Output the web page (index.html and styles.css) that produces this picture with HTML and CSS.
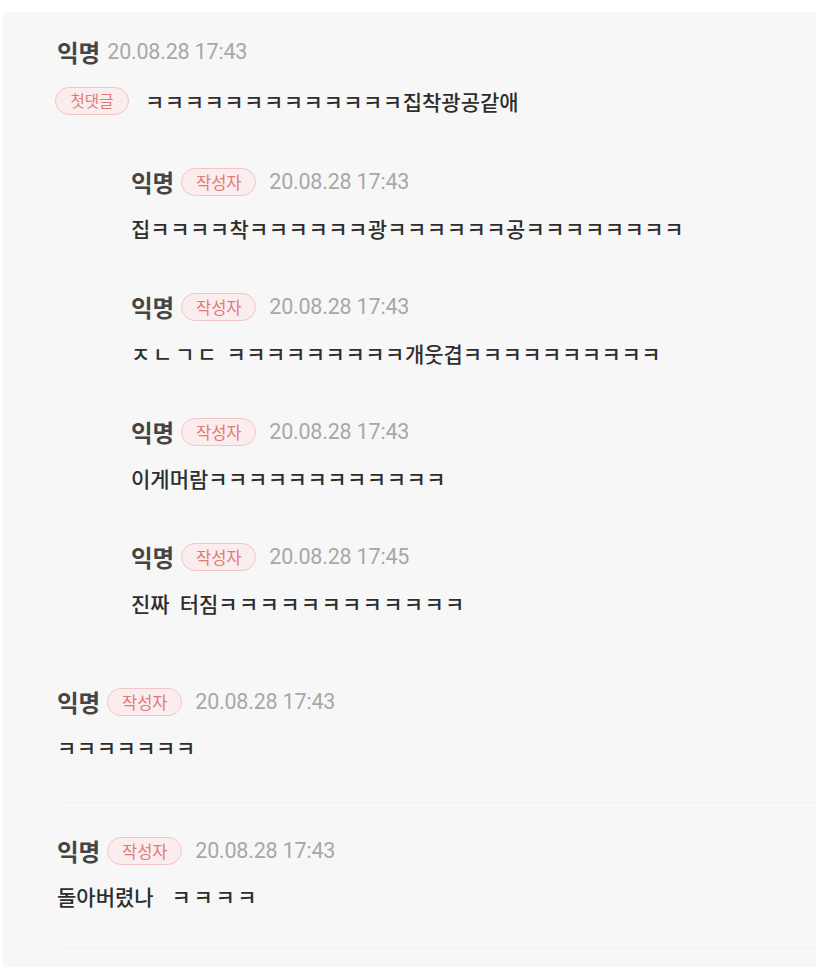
FILE: index.html
```html
<!DOCTYPE html>
<html lang="ko">
<head>
<meta charset="utf-8">
<link rel="stylesheet" href="styles.css">
</head>
<body>
<div class="page">
  <div class="comment top first">
    <div class="meta"><span class="name">익명</span><span class="date">20.08.28 17:43</span></div>
    <div class="text"><span class="badge first-badge">첫댓글</span><span class="k">ㅋㅋㅋㅋㅋㅋㅋㅋㅋㅋㅋㅋㅋ</span>집착광공같애</div>
  </div>

  <div class="replies">
    <div class="comment reply">
      <div class="meta"><span class="name">익명</span><span class="badge">작성자</span><span class="date">20.08.28 17:43</span></div>
      <div class="text">집<span class="k">ㅋㅋㅋㅋ</span>착<span class="k">ㅋㅋㅋㅋㅋㅋ</span>광<span class="k">ㅋㅋㅋㅋㅋㅋ</span>공<span class="k">ㅋㅋㅋㅋㅋㅋㅋㅋ</span></div>
    </div>
    <div class="comment reply">
      <div class="meta"><span class="name">익명</span><span class="badge">작성자</span><span class="date">20.08.28 17:43</span></div>
      <div class="text"><span class="j">ㅈㄴㄱㄷ</span><span class="sp sp-narrow"> </span><span class="k">ㅋㅋㅋㅋㅋㅋㅋㅋㅋ</span>개웃겹<span class="k">ㅋㅋㅋㅋㅋㅋㅋㅋㅋㅋ</span></div>
    </div>
    <div class="comment reply">
      <div class="meta"><span class="name">익명</span><span class="badge">작성자</span><span class="date">20.08.28 17:43</span></div>
      <div class="text">이게머람<span class="k">ㅋㅋㅋㅋㅋㅋㅋㅋㅋㅋㅋㅋ</span></div>
    </div>
    <div class="comment reply">
      <div class="meta"><span class="name">익명</span><span class="badge">작성자</span><span class="date">20.08.28 17:45</span></div>
      <div class="text">진짜<span class="sp"> </span>터짐<span class="k k-wide">ㅋㅋㅋㅋㅋㅋㅋㅋㅋㅋㅋㅋ</span></div>
    </div>
  </div>

  <div class="comment top second">
    <div class="meta"><span class="name">익명</span><span class="badge">작성자</span><span class="date">20.08.28 17:43</span></div>
    <div class="text"><span class="k">ㅋㅋㅋㅋㅋㅋㅋ</span></div>
  </div>
  <div class="sep"></div>

  <div class="comment top third">
    <div class="meta"><span class="name">익명</span><span class="badge">작성자</span><span class="date">20.08.28 17:43</span></div>
    <div class="text">돌아버렸나<span class="sp sp-wide"> </span><span class="k k-xwide">ㅋㅋㅋㅋ</span></div>
  </div>
  <div class="sep"></div>
</div>
</body>
</html>
```

FILE: styles.css
```css
html, body {
  margin: 0;
  padding: 0;
  background: #ffffff;
}

body {
  font-family: "Noto Sans CJK KR", "Noto Sans", sans-serif;
  color: #333333;
}

.page {
  margin: 12px 2px 0 3px;
  background: #f7f7f7;
  min-height: 955px;
  padding-top: 25px;
  box-sizing: border-box;
}

.comment {
  display: flex;
  flex-direction: column;
}

.top {
  padding-left: 54px;
}

.meta {
  height: 30px;
  display: flex;
  align-items: center;
  gap: 7px;
}

.name {
  font-size: 23.5px;
  font-weight: 700;
  color: #454545;
  line-height: 30px;
}

.date {
  font-family: Roboto, "Liberation Sans", sans-serif;
  font-size: 21.5px;
  color: #a8a8a8;
  line-height: 30px;
  letter-spacing: -0.2px;
}

.badge + .date {
  margin-left: 6px;
}

.badge {
  display: inline-flex;
  align-items: center;
  justify-content: center;
  box-sizing: border-box;
  width: 75px;
  height: 28px;
  border: 1.5px solid #f2c6c6;
  border-radius: 14px;
  background: #fbeded;
  color: #df7a7a;
  font-size: 16.5px;
  font-weight: 400;
  line-height: 1;
}

.first-badge {
  margin-left: -2px;
  margin-right: 16px;
  width: 74px;
  font-size: 15.5px;
}

.text {
  height: 30px;
  display: flex;
  align-items: center;
  font-size: 21px;
  font-weight: 500;
  line-height: 30px;
  color: #2e2e2e;
  white-space: pre;
}

.k {
  letter-spacing: 0.5px;
}

.k-wide {
  letter-spacing: 1.3px;
}

.k-xwide {
  letter-spacing: 2.6px;
}

.j {
  letter-spacing: 2.8px;
}

.sp {
  display: inline-block;
  width: 10px;
}

.sp-narrow {
  width: 7px;
}

.sp-wide {
  width: 18px;
}

.first .text {
  margin-top: 19px;
}

.replies {
  padding-left: 128px;
  margin-top: 51px;
  display: flex;
  flex-direction: column;
  gap: 49px;
}

.reply .text {
  margin-top: 16px;
}

.second {
  margin-top: 69px;
  padding-bottom: 40px;
}

.second .text,
.third .text {
  margin-top: 15px;
}

.third {
  padding-top: 33px;
  padding-bottom: 37px;
}

.sep {
  height: 1px;
  margin-left: 61px;
  background: #f0f0f0;
}
```
